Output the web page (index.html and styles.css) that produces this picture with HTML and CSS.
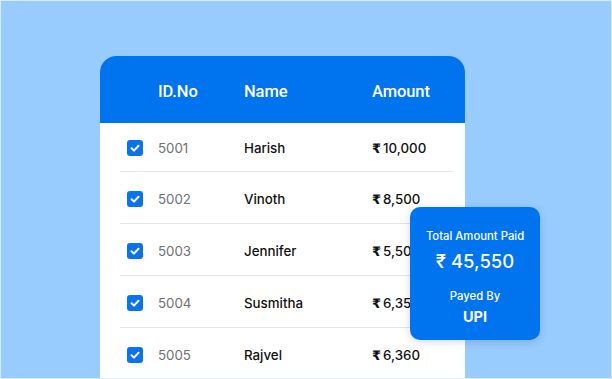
FILE: index.html
```html
<!DOCTYPE html>
<html lang="en">
<head>
<meta charset="utf-8">
<title>Payments</title>
<link rel="stylesheet" href="styles.css">
</head>
<body>
<div class="page">
  <div class="stage">
    <div class="card">
      <div class="card-head">
        <span>ID.No</span>
        <span>Name</span>
        <span>Amount</span>
      </div>
      <div class="rows">
        <div class="row"><span class="check"><svg viewBox="0 0 16 16" width="16" height="16"><path d="M4.6 8.3 L7 10.6 L11.5 5.8" fill="none" stroke="#fff" stroke-width="2" stroke-linecap="round" stroke-linejoin="round"/></svg></span><span class="id">5001</span><span class="name">Harish</span><span class="amt"><span class="rs">₹</span>10,000</span></div>
        <div class="row"><span class="check"><svg viewBox="0 0 16 16" width="16" height="16"><path d="M4.6 8.3 L7 10.6 L11.5 5.8" fill="none" stroke="#fff" stroke-width="2" stroke-linecap="round" stroke-linejoin="round"/></svg></span><span class="id">5002</span><span class="name">Vinoth</span><span class="amt"><span class="rs">₹</span>8,500</span></div>
        <div class="row"><span class="check"><svg viewBox="0 0 16 16" width="16" height="16"><path d="M4.6 8.3 L7 10.6 L11.5 5.8" fill="none" stroke="#fff" stroke-width="2" stroke-linecap="round" stroke-linejoin="round"/></svg></span><span class="id">5003</span><span class="name">Jennifer</span><span class="amt"><span class="rs">₹</span>5,500</span></div>
        <div class="row"><span class="check"><svg viewBox="0 0 16 16" width="16" height="16"><path d="M4.6 8.3 L7 10.6 L11.5 5.8" fill="none" stroke="#fff" stroke-width="2" stroke-linecap="round" stroke-linejoin="round"/></svg></span><span class="id">5004</span><span class="name">Susmitha</span><span class="amt"><span class="rs">₹</span>6,350</span></div>
        <div class="row"><span class="check"><svg viewBox="0 0 16 16" width="16" height="16"><path d="M4.6 8.3 L7 10.6 L11.5 5.8" fill="none" stroke="#fff" stroke-width="2" stroke-linecap="round" stroke-linejoin="round"/></svg></span><span class="id">5005</span><span class="name">Rajvel</span><span class="amt"><span class="rs">₹</span>6,360</span></div>
      </div>
    </div>
    <div class="summary">
      <div class="sum-label">Total Amount Paid</div>
      <div class="sum-total">₹ 45,550</div>
      <div class="sum-label by">Payed By</div>
      <div class="sum-method">UPI</div>
    </div>
  </div>
</div>
</body>
</html>
```

FILE: styles.css
```css
html, body {
  margin: 0;
  padding: 0;
}
body {
  width: 612px;
  height: 379px;
  overflow: hidden;
  font-family: Inter, "Noto Sans", "DejaVu Sans", sans-serif;
}
.page {
  box-sizing: border-box;
  width: 612px;
  height: 379px;
  background: #98cbfe;
  border: 1px solid #d9ecff;
  overflow: hidden;
  padding: 55px 0 0 99px;
}
.stage {
  position: relative;
  width: 365px;
}
.card {
  width: 365px;
  height: 360px;
  background: #fff;
  border-radius: 16px 16px 0 0;
  overflow: hidden;
}
.card-head {
  height: 67px;
  box-sizing: border-box;
  padding-top: 4px;
  background: #0073ee;
  color: #fff;
  display: grid;
  grid-template-columns: 86px 128px 1fr;
  align-items: center;
  padding-left: 58px;
  font-family: Roboto, sans-serif;
  font-weight: 500;
  font-size: 16.5px;
  letter-spacing: -0.1px;
}
.rows {
  padding: 0 12px 0 20px;
}
.row {
  box-sizing: border-box;
  height: 52px;
  padding-top: 2px;
  border-bottom: 1px solid #e4e4e4;
  display: grid;
  grid-template-columns: 7px 16px 15px 86px 128px 1fr;
  align-items: center;
  font-size: 13.3px;
}
.row:first-child {
  height: 49px;
  padding-top: 1px;
}
.check {
  grid-column: 2;
  width: 16px;
  height: 16px;
  border-radius: 3px;
  background: #0a72ea;
  display: flex;
}
.id {
  grid-column: 4;
  color: #707070;
}
.name {
  color: #111;
  font-weight: 500;
}
.amt {
  color: #111;
  font-weight: 500;
}
.rs {
  font-family: "DejaVu Sans", sans-serif;
  font-weight: 700;
  font-size: 13px;
  margin-right: 2px;
}
.summary {
  position: absolute;
  left: 310px;
  top: 151px;
  width: 130px;
  height: 133px;
  box-sizing: border-box;
  background: #0073ee;
  border-radius: 10px;
  box-shadow: 0 2px 8px rgba(0, 40, 100, 0.18);
  color: #fff;
  display: flex;
  flex-direction: column;
  align-items: center;
  padding-top: 22px;
}
.sum-label {
  font-size: 11.3px;
  font-weight: 500;
  line-height: 14px;
}
.sum-total {
  font-size: 18.5px;
  font-weight: 500;
  line-height: 22px;
  margin-top: 7px;
}
.sum-label.by {
  margin-top: 17px;
}
.sum-method {
  font-size: 14.5px;
  font-weight: 700;
  line-height: 18px;
  margin-top: 5px;
}
```
